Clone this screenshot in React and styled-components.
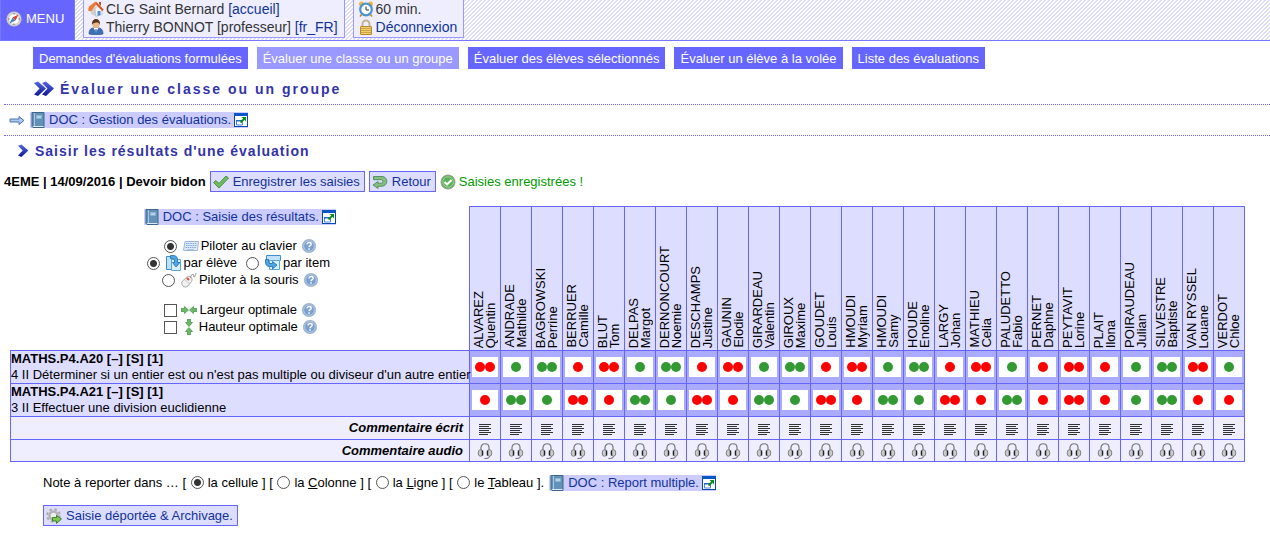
import React from "react";
import styled, { createGlobalStyle, css } from "styled-components";

const GlobalStyle = createGlobalStyle`
  *, *::before, *::after { box-sizing: border-box; }
  body {
    margin: 0;
    background: #fff;
    color: #000;
    font: 13px/16px Arial, "Liberation Sans", sans-serif;
  }
`;

/* ---------- icons ---------- */

const Svg = styled.svg`
  display: inline-block;
  flex: none;
  vertical-align: -3px;
`;

const Icon = ({ w = 16, h = 16, children }) => (
  <Svg width={w} height={h} viewBox={`0 0 ${w} ${h}`} aria-hidden="true">
    {children}
  </Svg>
);

const CompassIcon = () => (
  <Icon>
    <circle cx="8" cy="8" r="7" fill="#ececec" stroke="#c9c6bc" strokeWidth="1.2" />
    <circle cx="8" cy="8" r="5.500" fill="#fff" stroke="#999" strokeWidth=".6" />
    <path d="M12.500 3.500 9.500 9.500 6.500 6.500z" fill="#e0402c" />
    <path d="M3.500 12.500 6.500 6.500l3 3z" fill="#4a86c4" />
    <path d="M8 2v1.500M8 12.500V14M2 8h1.500M12.500 8H14" stroke="#777" />
  </Icon>
);

const HouseIcon = () => (
  <Icon>
    <path d="M3 8v5l5 2.500V6z" fill="#d0d0d0" />
    <path d="m8 15.500 6-2V7l-3.500-3.500L7 8z" fill="#f6f6f6" stroke="#aaa" strokeWidth=".5" />
    <path d="m7.500 1.500 7.500 8" stroke="#d65a20" strokeWidth="2" />
    <path d="M7.500.5 1 5.500l-1 4 3 1L8.500 3z" fill="#ee7a35" />
    <path d="M11 1h2v4l-2-2z" fill="#c64a1c" />
    <path d="M9.500 10h3v4l-3 1z" fill="#4c8fd0" />
  </Icon>
);

const UserIcon = () => (
  <Icon>
    <path d="M1 15c0-4 1.500-5.500 4-6h6c2.500.5 4 2 4 6-3 1-11 1-14 0z" fill="#3f70b5" stroke="#244a86" strokeWidth=".6" />
    <path d="m5.500 9 2.500 4 2.500-4z" fill="#fff" />
    <path d="M7.500 10h1l.5 3-1 1-1-1z" fill="#4a86c4" />
    <circle cx="8" cy="5.500" r="3.600" fill="#eab885" />
    <path d="M4 6c-1-8 9-8 8 0-.5-2-2-2.500-3-2.500S4.500 4 4 6z" fill="#5a3418" />
  </Icon>
);

const ClockIcon = () => (
  <Icon>
    <circle cx="3.500" cy="3" r="2.500" fill="#f0b43c" />
    <circle cx="12.500" cy="3" r="2.500" fill="#f0b43c" />
    <path d="m3.500 13.500-1.500 2M12.500 13.500l1.500 2" stroke="#c98512" strokeWidth="1.500" />
    <circle cx="8" cy="8.500" r="5.800" fill="#fff" stroke="#4a93cf" strokeWidth="2.200" />
    <path d="M8 5.500V9h3" fill="none" stroke="#333" />
  </Icon>
);

const LockIcon = () => (
  <Icon>
    <path d="M4.500 8V5a3.500 3.500 0 0 1 7 0v3" fill="none" stroke="#c4b48c" strokeWidth="2" />
    <rect x="2.500" y="7.500" width="11" height="8" rx=".5" fill="#efcf6c" stroke="#b8892a" />
    <path d="M3 9.500h10M3 11.500h10M3 13.500h10" stroke="#c79a3a" strokeWidth=".8" />
  </Icon>
);

const BookIcon = () => (
  <Icon>
    <path d="M2 .5h12v15H3l-1-1z" fill="#6392b8" stroke="#3d6788" />
    <path d="M4.500 1v13.500" stroke="#a9c9e0" />
    <path d="M3 14.500h10.500" stroke="#dce9f3" />
    <rect x="6.500" y="3.500" width="5" height="3" fill="#b5d2e8" stroke="#8ab2d0" strokeWidth=".6" />
  </Icon>
);

const PopupIcon = () => (
  <Icon w={14} h={14}>
    <rect x=".5" y=".5" width="13" height="13" fill="#fff" stroke="#0648b4" />
    <path d="M0 0h14v3H0z" fill="#0a56c8" />
    <path d="M2.500 7.500h6v4.500h-6z" fill="#fff" stroke="#4b86d8" />
    <path d="M2 7h7v1.500H2z" fill="#2467c8" />
    <path d="m6.500 9.500 4-4" stroke="#0a8f1a" strokeWidth="1.800" />
    <path d="M7.500 4H12v4.500z" fill="#0a8f1a" />
  </Icon>
);

const ArrowIcon = () => (
  <Icon>
    <path d="M1 7h9V4.500L15 8.500l-5 4V10H1z" fill="#a9c8ee" stroke="#4a74ac" strokeWidth="1" />
  </Icon>
);

const Chevron = ({ x = 0, s = 1 }) => (
  <path transform={`translate(${x} 0) scale(${s})`} d="M0 2 4 .5 12 7.500 4 15l-4-1.500 5.500-6z" fill="url(#chevronBlue)" />
);

const ChevronFill = () => (
  <defs>
    <linearGradient id="chevronBlue" x1="0" y1="0" x2="0" y2="1">
      <stop offset="0" stopColor="#5468e8" />
      <stop offset="1" stopColor="#0c1696" />
    </linearGradient>
  </defs>
);

const DoubleChevronIcon = () => (
  <Icon w={20} h={16}><ChevronFill /><Chevron /><Chevron x={8} /></Icon>
);

const ChevronIcon = () => (
  <Icon w={12} h={13}><ChevronFill /><Chevron s={0.86} /></Icon>
);

const CheckIcon = () => (
  <Icon>
    <path d="m.5 8.500 2.500-2L6 9.500 13 2l2.500 2L6 14z" fill="#6cbf5a" stroke="#3c8c38" strokeWidth=".9" />
  </Icon>
);

const ReturnIcon = () => (
  <Icon>
    <path d="M1.500 2.500H10a4.800 4.800 0 0 1 0 9.700H6v2.300L1 11l5-3.500v1.700h3.500a1.800 1.800 0 0 0 0-3.500h-8z" fill="#84be80" stroke="#4a8a52" strokeWidth=".9" />
  </Icon>
);

const OkIcon = () => (
  <Icon>
    <circle cx="8" cy="8" r="7" fill="#5cb058" stroke="#8e9c8c" />
    <circle cx="8" cy="8" r="5.300" fill="none" stroke="#a9dca4" strokeWidth=".8" />
    <path d="m4.500 8 2.500 2.500L11.500 6" fill="none" stroke="#fff" strokeWidth="2" />
  </Icon>
);

const KeyboardIcon = () => (
  <Icon>
    <path d="M2 3.500h13.500l-1 9H.5z" fill="#dfeafa" stroke="#9ab8dc" />
    <path d="M3 5.500h11M3 7.500h10.500M2.500 9.500h10.500" stroke="#85a8d2" strokeDasharray="1.500 .7" />
    <path d="M4 11.500h7" stroke="#a9c4e4" />
  </Icon>
);

const MouseIcon = () => (
  <Icon>
    <path d="M1.500 9 6 5c3-2 6.500 1 4.500 4.500L7 14c-3 3-8.500-1-5.500-5z" fill="#f0f0f0" stroke="#999" strokeWidth=".8" />
    <path d="m3.500 7.500 5.500 4.500" stroke="#bbb" strokeWidth=".7" />
    <path d="M6 6 8 8" stroke="#e34b35" strokeWidth="2" />
    <path d="M9.500 6c0-3 2-4 3-3.500S12 5 13 5s1.500-2 2-4" fill="none" stroke="#888" strokeWidth=".9" />
  </Icon>
);

const ByPupilIcon = () => (
  <Icon>
    <path d="M.5 1.500h5v13h-5z" fill="#bfe2fa" stroke="#3d8fd0" />
    <path d="M5.500 4.500h9v11h-9z" fill="#d8efff" stroke="#5aa6dc" />
    <path d="M4.500.5H7c3 0 4.500 1.500 4.500 4v3H14l-4 4.500-3.500-4.500h2V5c0-1-.5-1.500-1.500-1.500H4.500z" fill="#4fa8e4" stroke="#1b6cb5" strokeWidth=".8" />
  </Icon>
);

const ByItemIcon = () => (
  <Icon>
    <path d="M1.500.5h14v5h-14z" fill="#bfe2fa" stroke="#3d8fd0" />
    <path d="M4.500 5.500h10v9h-10z" fill="#d8efff" stroke="#5aa6dc" />
    <path d="M.5 4.500V7c0 3 1.500 4.500 4 4.500h3V14l4.500-4-4.500-3.500v2H5C4 8.500 3.500 8 3.500 7V4.500z" fill="#4fa8e4" stroke="#1b6cb5" strokeWidth=".8" />
  </Icon>
);

const HelpIcon = () => (
  <Icon>
    <circle cx="8" cy="8" r="6.500" fill="#7a9fce" stroke="#a3b6cc" strokeWidth="1.200" />
    <circle cx="8" cy="8" r="5.300" fill="none" stroke="#c4d8f0" strokeWidth=".8" />
    <path d="M6 6.500c0-2.800 4.200-2.400 4.200-.3C10.200 7.700 8 7.700 8 9.300" fill="none" stroke="#fff" strokeWidth="1.400" />
    <path d="M7.300 10.300h1.500v1.500H7.300z" fill="#fff" />
  </Icon>
);

const squeezeArrow = "M0 6.500h3.500v-2L7.500 8l-4 3.500v-2H0z";

const WidthIcon = () => (
  <Icon>
    <g fill="#6cb866" stroke="#4d9a50" strokeWidth=".8">
      <path d={squeezeArrow} />
      <path d={squeezeArrow} transform="matrix(-1 0 0 1 16 0)" />
    </g>
  </Icon>
);

const HeightIcon = () => (
  <Icon>
    <g fill="#6cb866" stroke="#4d9a50" strokeWidth=".8">
      <path d={squeezeArrow} transform="rotate(90 8 8)" />
      <path d={squeezeArrow} transform="rotate(-90 8 8)" />
    </g>
  </Icon>
);

const LinesIcon = () => (
  <Icon>
    <path d="M2 4.500h12M2 6.500h10M2 8.500h12M2 10.500h10M2 12.500h12M2 14.500h9" stroke="#333" />
  </Icon>
);

const HeadsetIcon = () => (
  <Icon>
    <path d="M4 8V4.500c0-5 8-5 8 0V8" fill="none" stroke="#777" strokeWidth="1.200" />
    <ellipse cx="3.500" cy="10" rx="2.300" ry="3.300" fill="#ccc" stroke="#777" strokeWidth=".9" />
    <ellipse cx="12.500" cy="10" rx="2.300" ry="3.300" fill="#ccc" stroke="#777" strokeWidth=".9" />
    <path d="M5.500 7.500v5M10.500 7.500v5" stroke="#222" strokeWidth="1.400" />
    <path d="M12.500 13.500c0 1.500-2 2-5 2" fill="none" stroke="#666" />
  </Icon>
);

const GearIcon = () => (
  <Icon>
    <circle cx="7.500" cy="7.500" r="6.300" fill="none" stroke="#aaa" strokeWidth="2" strokeDasharray="2.600 2.350" />
    <circle cx="7.500" cy="7.500" r="4" fill="#eee" stroke="#b4b4b4" strokeWidth="2.500" />
    <path d="M6.500 9.500h4v-2L15.500 11l-5 4.500v-2.500h-4z" fill="#7ec850" stroke="#2f7d22" strokeWidth=".9" />
  </Icon>
);

/* ---------- shared parts ---------- */

const Link = styled.a`
  color: #139;
  text-decoration: none;
`;

const DocAnchor = styled(Link)`
  display: inline-flex;
  align-items: center;
  gap: 3px;
  height: 16px;
  background: #ccf;
  vertical-align: top;
`;

const DocLink = ({ children }) => (
  <DocAnchor href="#doc">
    <BookIcon />
    <span>{children}</span>
    <PopupIcon />
  </DocAnchor>
);

const Button = styled.button`
  display: inline-flex;
  align-items: center;
  gap: 4px;
  height: 21px;
  padding: 0 4px 0 2px;
  border: 1px solid #66f;
  background: #ddf;
  color: #139;
  font: inherit;
`;

const tick = css`
  appearance: none;
  flex: none;
  width: 13px;
  height: 13px;
  border: 1px solid #555;
  background: #fff;
  vertical-align: -2px;
`;

const Radio = styled.input.attrs({ type: "radio" })`
  ${tick}
  margin: 0 4px 0 1px;
  border-radius: 50%;
  &:checked {
    background: radial-gradient(circle, #333 0 3px, #fff 4px);
  }
`;

const Checkbox = styled.input.attrs({ type: "checkbox" })`
  ${tick}
  margin: 0 2px;
`;

/* ---------- top bar ---------- */

const TopBar = styled.header`
  display: flex;
  height: 41px;
  border-bottom: 1px solid #77f;
  background: linear-gradient(135deg, #ddf 25%, #fff 25% 50%, #ddf 50% 75%, #fff 75%) 0 0 / 4px 4px;
`;

const MenuButton = styled.button`
  display: flex;
  align-items: center;
  gap: 4px;
  width: 75px;
  padding: 0 0 3px 5px;
  border: 1px solid #77f;
  border-width: 0 1px;
  background: #66f;
  color: #fff;
  font: inherit;
`;

const InfoBox = styled.div`
  margin: 0 0 2px 8px;
  padding: 0 6px 0 4px;
  border: 1px solid #99f;
  border-top: 0;
  background: #eef;
  color: #333;
  font-size: 14px;
  line-height: 18px;
  white-space: nowrap;
`;

const InfoLine = styled.div`
  display: flex;
  align-items: center;
  gap: 2px;
`;

/* ---------- navigation and titles ---------- */

const Nav = styled.nav`
  display: flex;
  flex-wrap: wrap;
  gap: 9px;
  padding: 6px 33px 0;
`;

const NavLink = styled.a`
  padding: 4px 6px 2px;
  background: ${(p) => (p.$current ? "#99f" : "#66f")};
  color: #fff;
  text-decoration: none;
`;

const Main = styled.main`
  padding-left: 4px;
`;

const Title = styled.h1`
  display: flex;
  align-items: center;
  gap: 6px;
  height: 35px;
  margin: 0;
  padding: 5px 0 0 30px;
  color: #33a;
  font-size: 14px;
  letter-spacing: 2px;
`;

const Subtitle = styled.h2`
  display: flex;
  align-items: center;
  gap: 5px;
  height: 29px;
  margin: 0;
  padding-left: 14px;
  color: #33a;
  font-size: 14px;
  letter-spacing: 1px;
`;

const DocBar = styled.div`
  display: flex;
  align-items: center;
  gap: 5px;
  height: 32px;
  padding-left: 5px;
  border: 1px dotted #66f;
  border-width: 1px 0;
`;

const ActionBar = styled.div`
  display: flex;
  align-items: center;
  gap: 4px;
  padding: 6px 0 14px;
`;

const Status = styled.output`
  display: flex;
  gap: 3px;
  color: #090;
`;

/* ---------- results table ---------- */

const Table = styled.table`
  table-layout: fixed;
  width: 1235px;
  margin-left: 6px;
  border-collapse: collapse;
`;

const ItemCol = styled.col`
  width: 459px;
`;

const Controls = styled.td`
  padding: 2px 0 0;
  vertical-align: top;
`;

const ControlGroup = styled.div`
  display: flex;
  flex-direction: column;
  align-items: center;
  margin-bottom: 13px;
`;

const ControlLine = styled.div`
  display: flex;
  align-items: center;
  height: 17px;
`;

const Choice = styled.label`
  display: flex;
  align-items: center;
  gap: 2px;
  margin-right: ${(p) => p.$after || 4}px;
`;

const cell = css`
  border: 1px solid #66f;
  font-weight: normal;
`;

const PupilHead = styled.th`
  ${cell}
  height: 144px;
  padding: 0 0 2px 3px;
  background: #ddf;
  text-align: left;
  vertical-align: bottom;
`;

const PupilName = styled.span`
  display: block;
  writing-mode: vertical-rl;
  transform: rotate(180deg);
  line-height: 12px;
  text-align: left;
  white-space: nowrap;
`;

const ItemHead = styled.th`
  ${cell}
  height: 33px;
  padding: 0;
  background: #ddf;
  text-align: left;
  white-space: nowrap;
`;

const ScoreCell = styled.td`
  ${cell}
  padding: 0 2px;
  background: #aaf;
`;

const ScoreButton = styled.button`
  display: flex;
  align-items: center;
  justify-content: center;
  width: 100%;
  height: 20px;
  padding: 0;
  border: 0;
  background: #fff;
`;

const Dot = styled.span`
  width: 10px;
  height: 10px;
  border-radius: 50%;
  background: ${(p) => p.$color};
`;

const CommentHead = styled.th`
  ${cell}
  height: ${(p) => p.$height}px;
  padding: 0 6px 0 0;
  background: #eef;
  font-weight: bold;
  font-style: italic;
  text-align: right;
`;

const CommentCell = styled.td`
  ${cell}
  padding: 0;
  background: #eef;
`;

const IconButton = styled.button`
  display: flex;
  justify-content: center;
  width: 100%;
  padding: 0;
  border: 0;
  background: none;
`;

const Footer = styled.footer`
  padding: 12px 0 0 39px;
`;

const ReportLine = styled.div`
  display: flex;
  align-items: center;
  gap: 5px;
  height: 18px;
  margin-bottom: 13px;
`;

/* ---------- data ---------- */

const pupils = [
  ["ALVAREZ", "Quentin", "RR", "R"],
  ["ANDRADE", "Mathilde", "V", "VV"],
  ["BAGROWSKI", "Perrine", "VV", "V"],
  ["BERRUER", "Camille", "R", "RR"],
  ["BLUT", "Tom", "RR", "R"],
  ["DELPAS", "Margot", "V", "VV"],
  ["DERNONCOURT", "Noemie", "VV", "V"],
  ["DESCHAMPS", "Justine", "R", "RR"],
  ["GAUNIN", "Elodie", "RR", "R"],
  ["GIRARDEAU", "Valentin", "V", "VV"],
  ["GIROUX", "Maxime", "VV", "V"],
  ["GOUDET", "Louis", "R", "RR"],
  ["HMOUDI", "Myriam", "RR", "R"],
  ["HMOUDI", "Samy", "V", "VV"],
  ["HOUDE", "Enoline", "VV", "V"],
  ["LARGY", "Johan", "R", "RR"],
  ["MATHIEU", "Celia", "RR", "R"],
  ["PALUDETTO", "Fabio", "V", "VV"],
  ["PERNET", "Daphne", "R", "R"],
  ["PEYTAVIT", "Lorine", "RR", "RR"],
  ["PLAIT", "Ilona", "R", "R"],
  ["POIRAUDEAU", "Julian", "V", "V"],
  ["SILVESTRE", "Baptiste", "VV", "VV"],
  ["VAN RYSSEL", "Louane", "RR", "R"],
  ["VERDOT", "Chloe", "V", "R"],
];

const items = [
  ["MATHS.P4.A20 [–] [S] [1]", "4 II Déterminer si un entier est ou n'est pas multiple ou diviseur d'un autre entier"],
  ["MATHS.P4.A21 [–] [S] [1]", "3 II Effectuer une division euclidienne"],
];

const pages = [
  "Demandes d'évaluations formulées",
  "Évaluer une classe ou un groupe",
  "Évaluer des élèves sélectionnés",
  "Évaluer un élève à la volée",
  "Liste des évaluations",
];

const comments = [
  ["Commentaire écrit", LinesIcon, 23],
  ["Commentaire audio", HeadsetIcon, 22],
];

const Score = ({ label, value }) => (
  <ScoreButton aria-label={label}>
    {[...value].map((c, i) => (
      <Dot key={i} $color={c === "R" ? "#f00" : "#393"} />
    ))}
  </ScoreButton>
);

export default function App() {
  return (
    <>
      <GlobalStyle />
      <TopBar>
        <MenuButton><CompassIcon />MENU</MenuButton>
        <InfoBox>
          <InfoLine><HouseIcon /><span>CLG Saint Bernard <Link href="#accueil">[accueil]</Link></span></InfoLine>
          <InfoLine><UserIcon /><span>Thierry BONNOT [professeur] <Link href="#langue">[fr_FR]</Link></span></InfoLine>
        </InfoBox>
        <InfoBox>
          <InfoLine><ClockIcon /><span>60 min.</span></InfoLine>
          <InfoLine><LockIcon /><Link href="#deconnexion">Déconnexion</Link></InfoLine>
        </InfoBox>
      </TopBar>
      <Nav>
        {pages.map((p, i) => (
          <NavLink key={p} href="#page" $current={i === 1}>{p}</NavLink>
        ))}
      </Nav>
      <Main>
        <Title><DoubleChevronIcon />Évaluer une classe ou un groupe</Title>
        <DocBar><ArrowIcon /><DocLink>DOC : Gestion des évaluations.</DocLink></DocBar>
        <Subtitle><ChevronIcon />Saisir les résultats d'une évaluation</Subtitle>
        <ActionBar>
          <b>4EME | 14/09/2016 | Devoir bidon</b>
          <Button><CheckIcon />Enregistrer les saisies</Button>
          <Button><ReturnIcon />Retour</Button>
          <Status><OkIcon />Saisies enregistrées !</Status>
        </ActionBar>
        <Table>
          <colgroup>
            <ItemCol />
            {pupils.map((p, i) => <col key={i} />)}
          </colgroup>
          <thead>
            <tr>
              <Controls>
                <ControlGroup><DocLink>DOC : Saisie des résultats.</DocLink></ControlGroup>
                <ControlGroup>
                  <ControlLine>
                    <Choice><Radio name="pilot" defaultChecked /><KeyboardIcon />Piloter au clavier</Choice>
                    <HelpIcon />
                  </ControlLine>
                  <ControlLine>
                    <Choice $after={8}><Radio name="direction" defaultChecked /><ByPupilIcon />par élève</Choice>
                    <Choice><Radio name="direction" /><ByItemIcon />par item</Choice>
                  </ControlLine>
                  <ControlLine>
                    <Choice><Radio name="pilot" /><MouseIcon />Piloter à la souris</Choice>
                    <HelpIcon />
                  </ControlLine>
                </ControlGroup>
                <ControlGroup>
                  <ControlLine>
                    <Choice><Checkbox /><WidthIcon />Largeur optimale</Choice>
                    <HelpIcon />
                  </ControlLine>
                  <ControlLine>
                    <Choice><Checkbox /><HeightIcon />Hauteur optimale</Choice>
                    <HelpIcon />
                  </ControlLine>
                </ControlGroup>
              </Controls>
              {pupils.map(([last, first]) => (
                <PupilHead key={last + first} scope="col">
                  <PupilName>{last}<br />{first}</PupilName>
                </PupilHead>
              ))}
            </tr>
          </thead>
          <tbody>
            {items.map(([ref, text], row) => (
              <tr key={ref}>
                <ItemHead scope="row"><b>{ref}</b><br />{text}</ItemHead>
                {pupils.map((p) => (
                  <ScoreCell key={p[0] + p[1]}>
                    <Score label={`${p[0]} ${p[1]}`} value={p[2 + row]} />
                  </ScoreCell>
                ))}
              </tr>
            ))}
            {comments.map(([label, CellIcon, height]) => (
              <tr key={label}>
                <CommentHead scope="row" $height={height}>{label}</CommentHead>
                {pupils.map((p) => (
                  <CommentCell key={p[0] + p[1]}>
                    <IconButton aria-label={label}><CellIcon /></IconButton>
                  </CommentCell>
                ))}
              </tr>
            ))}
          </tbody>
        </Table>
        <Footer>
          <ReportLine>
            <span>
              Note à reporter dans … [ <label><Radio name="report" defaultChecked />la cellule</label> ]
              {" "}[ <label><Radio name="report" />la <u>C</u>olonne</label> ]
              {" "}[ <label><Radio name="report" />la <u>L</u>igne</label> ]
              {" "}[ <label><Radio name="report" />le <u>T</u>ableau</label> ].
            </span>
            <DocLink>DOC : Report multiple.</DocLink>
          </ReportLine>
          <Button><GearIcon />Saisie déportée &amp; Archivage.</Button>
        </Footer>
      </Main>
    </>
  );
}
